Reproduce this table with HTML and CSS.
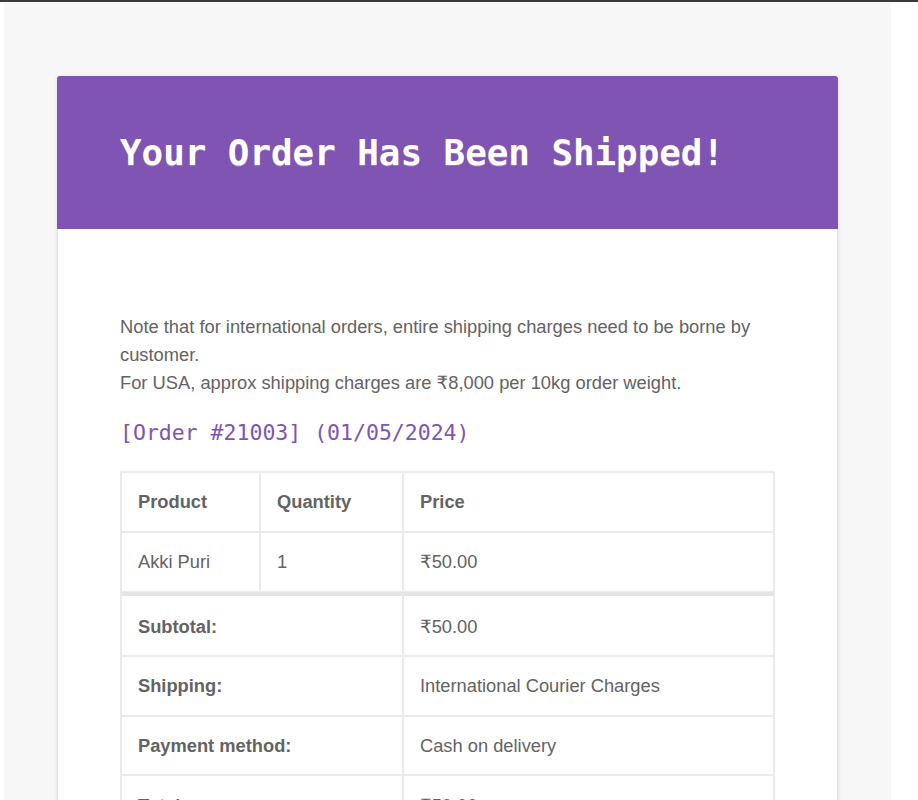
FILE: index.html
```html
<!DOCTYPE html>
<html lang="en">
<head>
<meta charset="utf-8">
<title>Your Order Has Been Shipped!</title>
<link rel="stylesheet" href="styles.css">
</head>
<body>
<div class="wrapper">
  <div class="card">
    <div class="card-header">
      <h1 class="title">Your Order Has Been Shipped!</h1>
    </div>
    <div class="card-body">
      <p class="note">Note that for international orders, entire shipping charges need to be borne by customer.<br>For USA, approx shipping charges are ₹8,000 per 10kg order weight.</p>
      <h2 class="order-title">[Order #21003] (01/05/2024)</h2>
      <table class="order-table">
        <colgroup>
          <col class="col-product">
          <col class="col-qty">
          <col class="col-price">
        </colgroup>
        <thead>
          <tr>
            <th>Product</th>
            <th>Quantity</th>
            <th>Price</th>
          </tr>
        </thead>
        <tbody>
          <tr>
            <td>Akki Puri</td>
            <td>1</td>
            <td>₹50.00</td>
          </tr>
        </tbody>
        <tfoot>
          <tr class="first">
            <th colspan="2">Subtotal:</th>
            <td>₹50.00</td>
          </tr>
          <tr>
            <th colspan="2">Shipping:</th>
            <td>International Courier Charges</td>
          </tr>
          <tr>
            <th colspan="2">Payment method:</th>
            <td>Cash on delivery</td>
          </tr>
          <tr>
            <th colspan="2">Total:</th>
            <td>₹50.00</td>
          </tr>
        </tfoot>
      </table>
    </div>
  </div>
</div>
</body>
</html>
```
FILE: styles.css
```css
html, body {
  margin: 0;
  padding: 0;
}

body {
  background: #ffffff;
  border-top: 2px solid #3a3a3a;
  font-family: "Liberation Sans", Arial, "DejaVu Sans", sans-serif;
  color: #636363;
}

.wrapper {
  width: 887px;
  margin: 1px 0 0 4px;
  padding: 73px 0 70px;
  background: #f7f7f7;
  box-sizing: border-box;
  min-height: 900px;
}

.card {
  width: 781px;
  margin: 0 auto;
  box-sizing: border-box;
  background: #ffffff;
  border: 1px solid #dedede;
  border-radius: 3px;
  box-shadow: 0 1px 4px rgba(0, 0, 0, 0.1);
}

.card-header {
  background: #7f54b3;
  border-radius: 3px 3px 0 0;
  margin: -1px -1px 0;
  padding: 47px 62px 47px 63px;
}

.title {
  margin: 0;
  font-family: "DejaVu Sans Mono", "Liberation Mono", monospace;
  font-weight: bold;
  font-size: 35.85px;
  line-height: 59px;
  color: #ffffff;
  text-shadow: 0 1px 0 #9976c2;
}

.card-body {
  padding: 84px 62px 40px;
}

.note {
  margin: 0 0 21px;
  font-size: 18.32px;
  line-height: 28px;
}

.order-title {
  margin: 0 0 23px;
  font-family: "DejaVu Sans Mono", "Liberation Mono", monospace;
  font-weight: normal;
  font-size: 21.5px;
  line-height: 30px;
  color: #7f54b3;
}

.order-table {
  width: 100%;
  border-collapse: separate;
  border-spacing: 0;
  border: 1px solid #ebebeb;
  font-size: 18.3px;
  line-height: 27.3px;
  color: #636363;
}

.col-product { width: 139px; }
.col-qty { width: 143px; }

.order-table th,
.order-table td {
  border: 1px solid #ebebeb;
  padding: 15.3px 15.6px 15.3px 16px;
  text-align: left;
  vertical-align: middle;
}

.order-table th {
  font-weight: bold;
}

.order-table tfoot tr.first th,
.order-table tfoot tr.first td {
  border-top: 4px solid #e5e5e5;
  padding-top: 17.3px;
  padding-bottom: 14.3px;
}
```
